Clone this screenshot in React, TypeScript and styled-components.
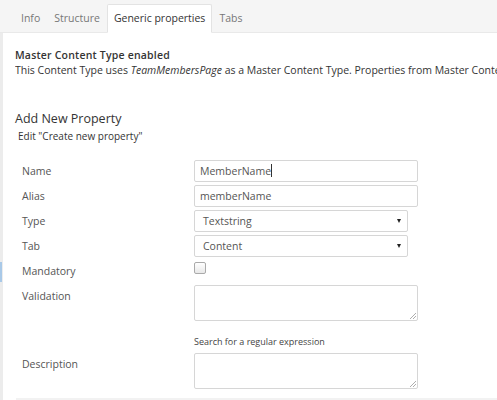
import styled, { createGlobalStyle } from 'styled-components';

const Global = createGlobalStyle`
  html, body {
    margin: 0;
    padding: 0;
    background: #fff;
    font-family: 'Open Sans', 'Liberation Sans', sans-serif;
    color: #343434;
  }
`;

const Page = styled.div`
  width: 497px;
  height: 400px;
  overflow: hidden;
`;

const TabBar = styled.div`
  display: flex;
  align-items: flex-end;
  height: 33px;
  padding-left: 14px;
  background: #f5f5f5;
  border-bottom: 1px solid #e9e9e9;
  box-sizing: border-box;
`;

const Tab = styled.div<{ $active?: boolean }>`
  font-size: 10.5px;
  line-height: 27px;
  padding: 0 6px;
  margin-bottom: -1px;
  color: ${(p) => (p.$active ? '#343434' : '#777')};
  background: ${(p) => (p.$active ? '#fff' : 'transparent')};
  border: 1px solid ${(p) => (p.$active ? '#e3e3e3' : 'transparent')};
  border-bottom-color: ${(p) => (p.$active ? '#fff' : 'transparent')};
  border-radius: 2px 2px 0 0;
`;

const Body = styled.div`
  border-left: 3px solid #ececec;
  height: 367px;
  box-sizing: border-box;
  padding: 15px 0 0 12px;
  position: relative;
`;

const Marker = styled.div`
  position: absolute;
  left: -3px;
  top: 229px;
  width: 2px;
  height: 20px;
  background: #a9c9e8;
`;

const Notice = styled.div`
  font-size: 10.5px;
  line-height: 15px;
  color: #343434;
  white-space: nowrap;
  overflow: hidden;

  strong {
    font-weight: 600;
    letter-spacing: 0.2px;
  }
  em {
    font-style: italic;
  }
`;

const Heading = styled.h3`
  margin: 32px 0 0;
  font-size: 12.5px;
  font-weight: 400;
  line-height: 18px;
  color: #343434;
`;

const Subheading = styled.div`
  margin: 1px 0 0 3px;
  font-size: 10px;
  line-height: 15px;
`;

const Form = styled.div`
  display: grid;
  grid-template-columns: 172px 224px;
  row-gap: 3px;
  margin: 16px 0 0 1px;
  padding: 0 0 9px 6px;
  border-bottom: 2px solid #f2f2f2;
`;

const Label = styled.div`
  font-size: 10.5px;
  color: #555;
  line-height: 22px;
`;

const Control = styled.div`
  display: flex;
  flex-direction: column;
`;

const TextInput = styled.div`
  height: 22px;
  box-sizing: border-box;
  border: 1px solid #d6d6d6;
  border-radius: 2px;
  padding: 0 5px;
  font-size: 10.5px;
  line-height: 20px;
  color: #555;
`;

const Caret = styled.span`
  display: inline-block;
  width: 1px;
  height: 13px;
  background: #333;
  vertical-align: -2px;
`;

const Select = styled.div`
  width: 214px;
  height: 22px;
  box-sizing: border-box;
  border: 1px solid #d6d6d6;
  border-radius: 2px;
  padding: 0 8px;
  font-size: 10.5px;
  line-height: 20px;
  color: #555;
  display: flex;
  justify-content: space-between;
  align-items: center;
`;

const Arrow = styled.span`
  width: 0;
  height: 0;
  border-left: 2.5px solid transparent;
  border-right: 2.5px solid transparent;
  border-top: 4px solid #222;
  margin-right: -2px;
`;

const Checkbox = styled.div`
  width: 10px;
  height: 10px;
  margin-top: 2px;
  border: 1px solid #aaa;
  border-radius: 2px;
  background: linear-gradient(#fff, #e8e8e8);
`;

const TextArea = styled.div`
  height: 36px;
  box-sizing: border-box;
  border: 1px solid #d6d6d6;
  border-radius: 2px;
  position: relative;
`;

const Grip = styled.svg`
  position: absolute;
  right: 1px;
  bottom: 1px;
`;

const Hint = styled.div`
  font-size: 9px;
  line-height: 14px;
  color: #444;
  margin: 14px 0 1px;
`;

function Area() {
  return (
    <TextArea>
      <Grip width="6" height="6" viewBox="0 0 6 6">
        <path d="M6 0L0 6M6 3L3 6" stroke="#999" strokeWidth="0.8" />
      </Grip>
    </TextArea>
  );
}

export default function App() {
  return (
    <Page>
      <Global />
      <TabBar>
        <Tab>Info</Tab>
        <Tab>Structure</Tab>
        <Tab $active>Generic properties</Tab>
        <Tab>Tabs</Tab>
      </TabBar>
      <Body>
        <Marker />
        <Notice>
          <strong>Master Content Type enabled</strong>
          <br />
          This Content Type uses <em>TeamMembersPage</em> as a Master Content Type. Properties from Master Content Types are not shown
        </Notice>
        <Heading>Add New Property</Heading>
        <Subheading>Edit "Create new property"</Subheading>
        <Form>
          <Label>Name</Label>
          <Control>
            <TextInput>
              MemberName<Caret />
            </TextInput>
          </Control>
          <Label>Alias</Label>
          <Control>
            <TextInput>memberName</TextInput>
          </Control>
          <Label>Type</Label>
          <Control>
            <Select>
              Textstring <Arrow />
            </Select>
          </Control>
          <Label>Tab</Label>
          <Control>
            <Select>
              Content <Arrow />
            </Select>
          </Control>
          <Label>Mandatory</Label>
          <Control>
            <Checkbox />
          </Control>
          <Label>Validation</Label>
          <Control>
            <Area />
            <Hint>Search for a regular expression</Hint>
          </Control>
          <Label>Description</Label>
          <Control>
            <Area />
          </Control>
        </Form>
      </Body>
    </Page>
  );
}
